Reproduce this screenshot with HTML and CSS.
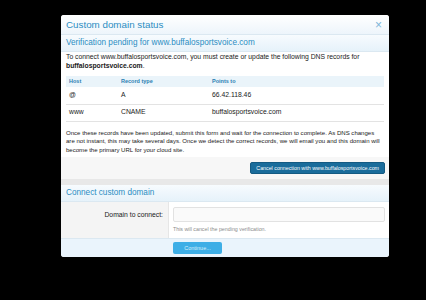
FILE: index.html
```html
<!DOCTYPE html>
<html lang="en">
<head>
	<meta charset="UTF-8">
	<title>Custom domain status</title>
	<link rel="stylesheet" href="styles.css">
</head>
<body>
	<div class="dialog">
		<div class="dialog-title">
			<span>Custom domain status</span>
			<span class="close">&times;</span>
		</div>

		<h2 class="section-head">Verification pending for www.buffalosportsvoice.com</h2>
		<div class="section-body">
			<p class="intro">To connect www.buffalosportsvoice.com, you must create or update the following DNS records for <b>buffalosportsvoice.com</b>.</p>
			<table class="records">
				<thead>
					<tr>
						<th class="col-host">Host</th>
						<th class="col-type">Record type</th>
						<th>Points to</th>
					</tr>
				</thead>
				<tbody>
					<tr>
						<td>@</td>
						<td>A</td>
						<td>66.42.118.46</td>
					</tr>
					<tr>
						<td>www</td>
						<td>CNAME</td>
						<td>buffalosportsvoice.com</td>
					</tr>
				</tbody>
			</table>
			<p class="note">Once these records have been updated, submit this form and wait for the connection to complete. As DNS changes are not instant, this may take several days. Once we detect the correct records, we will email you and this domain will become the primary URL for your cloud site.</p>
		</div>
		<div class="actions">
			<button class="btn btn-dark">Cancel connection with www.buffalosportsvoice.com</button>
		</div>

		<div class="divider"></div>

		<h2 class="section-head">Connect custom domain</h2>
		<div class="form-row">
			<label class="form-label">Domain to connect:</label>
			<div class="form-field">
				<input type="text" class="input">
				<div class="hint">This will cancel the pending verification.</div>
			</div>
		</div>
		<div class="form-footer">
			<button class="btn btn-light">Continue...</button>
		</div>
	</div>
</body>
</html>
```

FILE: styles.css
```css
*{
	margin: 0;
	padding: 0;
	box-sizing: border-box;
}
body{
	background: #000;
	font-family: "Liberation Sans", Arial, sans-serif;
	color: #1a1a1a;
}
.dialog{
	width: 328px;
	margin: 15px 0 0 61px;
	background: #fff;
	border-radius: 3px;
	overflow: hidden;
}
.dialog-title{
	display: flex;
	justify-content: space-between;
	align-items: center;
	height: 20px;
	padding: 0 7px 0 5px;
	font-size: 9.8px;
	color: #2b8dc2;
	background: linear-gradient(#ffffff, #edf5fb);
	border-bottom: 1px solid #dbe8f1;
}
.close{
	font-size: 12px;
	color: #7db5d8;
}
.section-head{
	height: 17px;
	line-height: 16px;
	padding: 0 5px;
	font-size: 8.2px;
	font-weight: normal;
	color: #2b8dc2;
	background: linear-gradient(#f7fbfe, #e6f2fa);
	border-bottom: 1px solid #dbe8f1;
}
.section-body{
	padding: 1px 5px 0 5px;
	line-height: 8.5px;
}
.intro{
	font-size: 6.8px;
}
.note{
	font-size: 6.05px;
	margin-top: 7px;
	padding-bottom: 3px;
}
.records{
	width: 100%;
	margin-top: 6px;
	border-collapse: collapse;
	font-size: 6.8px;
}
.records th{
	height: 11px;
	padding: 0 3px;
	text-align: left;
	font-size: 5.5px;
	color: #2b7fb3;
	background: #eaf4fa;
}
.records td{
	height: 17px;
	padding: 0 3px;
	border-bottom: 1px solid #e3e3e3;
}
.records .col-host{
	width: 52px;
}
.records .col-type{
	width: 91px;
}
.actions{
	display: flex;
	justify-content: flex-end;
	padding: 5px 4px 5px 0;
	background: #f7f7f7;
}
.btn{
	display: block;
	font-family: "Liberation Sans", Arial, sans-serif;
	font-weight: normal;
	border: none;
	border-radius: 2px;
	color: #fff;
}
.btn-dark{
	height: 12px;
	padding: 0 5px;
	font-size: 5.3px;
	background: #1a6c9b;
	border: 1px solid #145a82;
}
.divider{
	height: 6px;
	background: #e8e8e8;
}
.form-row{
	display: flex;
}
.form-label{
	width: 108px;
	padding: 9px 5px 0 0;
	text-align: right;
	font-size: 6.8px;
	background: #f4f4f4;
	border-right: 1px solid #e6e6e6;
}
.form-field{
	flex: 1;
	padding: 5px 4px 5px 4px;
}
.input{
	display: block;
	width: 100%;
	height: 15px;
	border: 1px solid #e2e2e2;
	border-radius: 2px;
	background: #fafafa;
}
.hint{
	margin-top: 3px;
	height: 8px;
	line-height: 8px;
	font-size: 5.3px;
	color: #8c8c8c;
}
.form-footer{
	display: flex;
	padding: 3px 0 3px 112px;
	background: #eaf4fc;
	border-top: 1px solid #dbe8f1;
}
.btn-light{
	width: 49px;
	height: 12px;
	font-size: 5.5px;
	background: #3eaee6;
	color: #d8effb;
}
```
